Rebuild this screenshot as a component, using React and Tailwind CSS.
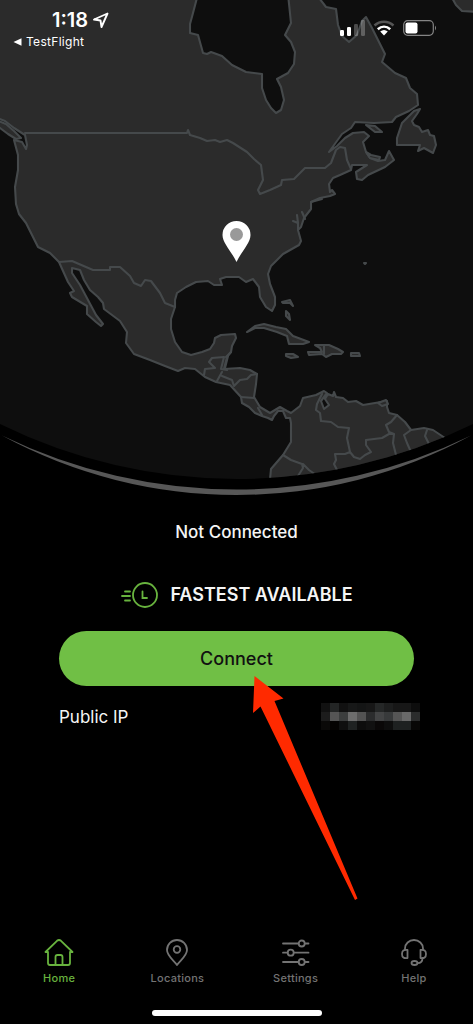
const LAND = [
  // Canada, down both coasts to Panama and the north of South America
  "M-6 -6L198 -6L193 13L190 24L190 33L198 35L203 53L207 54L211 52L222 56L232 65L246 72L262 74L262 88L266 100L271 108L276 113L281 110L284 100L281 87L277 79L288 73L294 64L295 52L291 42L285 35L291 23L288 -6L316 -6L326 7L336 9L338 25L342 36L349 42L357 35L362 21L366 17L372 28L379 42L385 54L382 62L395 73L406 78L410 88L417 94L418 105L409 111L396 117L392 122L374 123L355 122L351 128L342 134L329 152L337 146L345 138L353 133L364 132L369 136L363 142L366 152L370 158L378 161L385 160L389 151L394 160L385 167L368 175L362 180L357 179L356 172L367 165L352 165L351 170L340 175L333 178L329 184L330 192L332 190L335 194L330 196L320 198L311 202L311 209L304 218L301 227L298 230L301 241L299 245L283 254L271 266L268 274L270 284L275 297L275 305L272 311L266 307L260 297L259 287L253 279L246 282L239 277L226 277L220 279L222 285L214 285L208 281L196 282L186 287L177 293L175 300L175 307L171 319L171 329L175 342L182 352L191 355L202 352L210 349L214 343L215 338L221 335L235 334L236 338L232 346L231 352L227 357L224 369L240 368L250 370L257 374L256 384L254 397L260 407L270 413L280 407L287 411L291 413L300 406L303 398L316 395L324 391L327 393L321 401L324 409L329 405L325 399L328 394L333 396L334 392L336 397L343 398L348 402L356 401L363 405L375 403L387 401L387 407L389 413L397 415L405 422L411 430L424 428L433 430L445 438L445 500L268 500L271 469L283 455L291 442L291 423L290 418L286 418L283 411L278 411L274 416L272 420L268 418L262 416L255 413L249 407L242 403L241 397L230 385L216 382L205 377L195 369L185 368L178 371L165 366L150 360L134 354L126 343L127 332L120 321L104 309L103 303L98 297L90 290L84 280L80 270L72 268L72 273L80 285L88 300L96 315L103 324L101 326L96 322L87 314L87 306L72 297L70 293L74 291L68 282L59 262L50 253L38 247L26 223L19 214L16 204L15 187L18 170L18 155L14 140L22 142L26 149L27 145L25 135L14 128L5 121L-6 117Z",
  "M-4 120L6 124L14 131L21 138L16 139L8 134L-4 125Z",
  // Newfoundland
  "M420 109L414 111L402 123L397 138L397 145L420 145L418 151L424 148L433 153L436 145L434 136L430 135L428 130L422 132L419 127L414 125L412 121L417 114Z",
  "M366 125L375 126L382 132L375 132Z",
  "M366 152L371 155L380 157L379 160L370 158Z",
  "M451 -4L456 5L462 11L480 12L480 -4Z",
  // Cuba, Hispaniola, Jamaica, Puerto Rico, Bahamas
  "M247 332L255 326L264 324L276 327L286 329L293 336L309 342L303 344L289 344L287 336L277 332L264 328L255 328Z",
  "M315 345L329 345L338 349L343 352L341 354L332 354L326 357L322 354L309 355L308 352L322 352L320 348Z",
  "M286 354L293 354L298 357L291 358L286 356Z",
  "M351 353L359 353L360 356L351 356Z",
  "M282 302L290 300L293 306L290 303L283 303Z",
  "M286 311L289 314L290 320L286 316Z",
  "M378 403L386 400L388 404L382 406Z",
  "M364 263L366 263L365 264Z",
];

const BORDERS =
  "M25 133L187 133L188 130L190 135L200 138L207 141L215 140L220 142L227 140L233 143L247 152L254 159L261 165L263 180L258 190L260 194L270 190L281 185L282 180L294 179L305 168L325 168L331 163L336 150L340 147L345 148L347 160L351 169" +
  "M59 262L72 261L93 270L110 270L110 267L120 267L130 276L134 283L141 286L145 280L151 281L160 293L165 303L175 307" +
  "M204 375L205 369L215 368L209 362L212 358L224 357L221 369L227 370" +
  "M217 381L222 372M222 376L232 380L234 386L240 380L247 379L251 375L257 374M241 397L254 398M258 408L262 415" +
  "M231 352L226 357M228 356L225 368M298 230L298 223L293 221M297 215L298 223M302 212L305 219M311 202L322 199" +
  "M322 394L317 404L316 410L320 413L321 421L331 422L338 427L349 428L347 438L350 452L354 457L360 459L365 455L371 452L366 445L366 440L382 438L389 434L394 434" +
  "M350 452L345 454L335 454L336 460L334 464L338 472M397 415L391 422L386 425L389 432L394 434L393 443L396 455" +
  "M411 430L404 435L407 443L411 452M427 430L425 436L429 444M283 455L291 460L302 464L303 468L298 476M303 464L309 470L316 475M324 346L324 354";

function WorldMap() {
  return (
    <svg viewBox="0 0 473 500" className="col-start-1 row-start-1 block h-auto w-full" aria-hidden="true">
      <defs>
        <clipPath id="globe">
          <path d="M0 0H473V424A536 536 0 0 1 0 424Z" />
        </clipPath>
      </defs>
      <g clipPath="url(#globe)">
        <rect width="473" height="500" fill="#0e0e0e" />
        <g stroke="#45494b" strokeWidth="2.100" strokeLinejoin="round" strokeLinecap="round">
          {LAND.map((forma) => (
            <path key={forma} d={forma} fill="#2b2b2b" />
          ))}
          <path d={BORDERS} fill="none" />
        </g>
      </g>
      <path d="M2 435.500A492 492 0 0 0 471 435.500A536 536 0 0 1 2 435.500Z" fill="#575757" />
      <path d="M236.500 262C232 252 222.500 243 222.500 235A14 14 0 0 1 250.500 235C250.500 243 241 252 236.500 262Z" fill="#fff" />
      <circle cx="236.500" cy="234.500" r="6.500" fill="#999" />
    </svg>
  );
}

function StatusBar() {
  return (
    <header className="z-10 col-start-1 row-start-1 flex items-start justify-between pt-2 pr-9 pl-3 text-white">
      <div>
        <div className="flex items-center gap-1 pl-10">
          <span className="text-xl leading-6 font-semibold">1:18</span>
          <svg width="17" height="17" viewBox="0 0 17 17" fill="none" stroke="#fff" strokeWidth="1.9" strokeLinejoin="round">
            <path d="M15.500 1.500L2 7.500L8.500 8.500L9.500 15Z" />
          </svg>
        </div>
        <button className="flex items-center gap-1 text-xs leading-5 tracking-wide">
          <svg width="10" height="8" viewBox="0 0 10 8" fill="#fff">
            <path d="M1.500 4L9.500 .3V7.700Z" />
          </svg>
          TestFlight
        </button>
      </div>
      <div className="flex items-center gap-2 pt-3">
        <svg width="25" height="16" viewBox="0 0 25 16" fill="#fff">
          <rect x="0" y="10" width="4" height="6" rx="1.200" />
          <rect x="7" y="7" width="4" height="9" rx="1.200" />
          <rect x="14" y="4" width="4" height="12" rx="1.200" opacity=".25" />
          <rect x="21" y="0" width="4" height="16" rx="1.200" opacity=".25" />
        </svg>
        <svg width="22" height="16" viewBox="0 0 22 16" fill="none" strokeWidth="2.500">
          <path d="M1.500 5.500C7 .5 15 .5 20.500 5.500" stroke="#555" />
          <path d="M4.800 9.300C8.500 6 13.500 6 17.200 9.300" stroke="#fff" />
          <path d="M7.200 11.500Q11 8.500 14.800 11.500L11 15.500Z" fill="#fff" />
        </svg>
        <svg width="34" height="16" viewBox="0 0 34 16">
          <rect x=".7" y=".7" width="29.600" height="14.600" rx="4" fill="none" stroke="#858585" strokeWidth="1.200" />
          <rect x="2.500" y="2.500" width="12" height="11" rx="2" fill="#fff" />
          <path d="M32 5.500Q34 8 32 10.500Z" fill="#858585" />
        </svg>
      </div>
    </header>
  );
}

const MOSAIC = [
  "#111111", "#232525", "#111111", "#171818", "#141515", "#171717", "#252727", "#1d1e1e", "#171717", "#171717", "#0d0d0d",
  "#1c1c1c", "#555555", "#3c3e3e", "#6d6d6d", "#535353", "#2b2c2d", "#434445", "#383a3b", "#555555", "#696969", "#2b2c2c",
  "#0a0908", "#050302", "#0f0f0f", "#1f2222", "#0d0d0d", "#111111", "#0a0808", "#0e0e0e", "#1e2121", "#1e2121", "#080706",
];

const TABS = [
  {
    label: "Home",
    icon: (
      <>
        <path d="M1.500 14L13 2.800Q15 1.200 17 2.800L28.500 14H26V25Q26 27 24 27H6Q4 27 4 25V14Z" />
        <path d="M11.500 27V19Q11.500 17 13.500 17H16.500Q18.500 17 18.500 19V27" />
      </>
    ),
  },
  {
    label: "Locations",
    icon: (
      <>
        <path d="M15 27C12.500 23 5 18 5 12A10 10 0 0 1 25 12C25 18 17.500 23 15 27Z" />
        <circle cx="15" cy="11.500" r="3.300" />
      </>
    ),
  },
  {
    label: "Settings",
    icon: (
      <>
        <path d="M2 5.500H17.500M24 5.500H27.500M2 14.700H6.500M13 14.700H27.500M2 24H17.500M24 24H27.500" />
        <circle cx="20.700" cy="5.500" r="3" />
        <circle cx="9.700" cy="14.700" r="3" />
        <circle cx="20.700" cy="24" r="3" />
      </>
    ),
  },
  {
    label: "Help",
    icon: (
      <>
        <path d="M6 11.500V10.500A9 8.500 0 0 1 24 10.500V11.500" />
        <path d="M8.500 12V20Q3 21 3 16T8.500 12ZM21.500 12V20Q27 21 27 16T21.500 12Z" />
        <path d="M23.500 20Q23.500 25 18.500 25.200" />
        <ellipse cx="15.500" cy="25" rx="3" ry="2" />
      </>
    ),
  },
];

function TabBar() {
  return (
    <nav className="mt-auto grid grid-cols-4">
      {TABS.map((tab) => (
        <a
          key={tab.label}
          href={`#${tab.label.toLowerCase()}`}
          className="flex flex-col items-center gap-1 text-[11px] leading-4 font-medium tracking-wide text-[#737373] first:text-[#68b33e]"
        >
          <svg width="30" height="28" viewBox="0 0 30 28" fill="none" stroke="currentColor" strokeWidth="1.800" strokeLinecap="round" strokeLinejoin="round">
            {tab.icon}
          </svg>
          {tab.label}
        </a>
      ))}
    </nav>
  );
}

export default function App() {
  return (
    <div className="relative flex min-h-screen flex-col overflow-hidden bg-black font-['Inter',sans-serif] text-[#f5f5f5]">
      <div className="grid">
        <WorldMap />
        <StatusBar />
      </div>

      <main className="flex flex-col px-[59px] pt-5">
        <p className="text-center text-[17px] leading-6 font-medium">Not Connected</p>

        <button className="mt-[38px] flex items-center justify-center gap-3 text-lg leading-6 font-semibold">
          <svg width="38" height="26" viewBox="0 0 38 26" fill="none" stroke="#68b33e" strokeWidth="1.800" strokeLinecap="round">
            <circle cx="25" cy="13" r="12" />
            <path d="M22.500 9.500V16H27M5 9.500H10M2 14H10M5 18.500H10" />
          </svg>
          FASTEST AVAILABLE
        </button>

        <button className="mt-[23px] h-[55px] rounded-full bg-[#70bf45] text-lg font-medium text-[#111]">Connect</button>

        <div className="mt-[17px] -mr-1.5 flex items-center justify-between">
          <span className="text-[17px] leading-6">Public IP</span>
          <span className="grid grid-cols-11" role="img" aria-label="Hidden address">
            {MOSAIC.map((tono, i) => (
              <span key={i} className="size-[9px]" style={{ background: tono }} />
            ))}
          </span>
        </div>
      </main>

      <TabBar />
      <div className="mx-auto mt-6 mb-2 h-1.5 w-[170px] rounded-full bg-white" />

      <svg className="pointer-events-none absolute top-[675px] left-[252px]" width="108" height="227" viewBox="252 675 108 227" aria-hidden="true">
        <path d="M254.500 676L283.500 698.500L274.500 701L357.500 898.500L355 900L260.500 706.500L253 713Z" fill="#ff2a00" />
      </svg>
    </div>
  );
}
